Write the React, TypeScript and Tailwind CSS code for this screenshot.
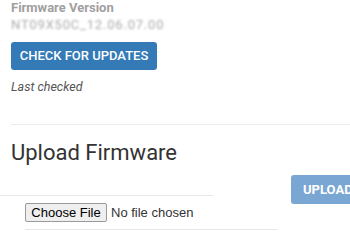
export default function App() {
  return (
    <div className="w-[350px] h-[250px] overflow-hidden bg-white font-['Roboto',sans-serif]">
      <div className="px-[11px]">
        <div className="text-[13px] leading-[15px] font-bold text-[#a0a0a0]">
          Firmware Version
        </div>
        <div className="mt-[3px] text-[13px] leading-[13px] tracking-[0.8px] text-[#ababab] blur-[1.2px]">
          NT09X50C_12.06.07.00
        </div>
        <button
          type="button"
          className="mt-[11px] flex h-[28px] w-[146px] items-center justify-center rounded-[3px] bg-[#337ab7] text-[13px] font-medium text-white"
        >
          CHECK FOR UPDATES
        </button>
        <div className="mt-[10px] text-[12.5px] leading-[14px] italic text-[#555555]">
          Last checked
        </div>
        <div className="mt-[30px] mr-[-11px] border-t border-[#ececec]" />
        <h2 className="mt-[15px] text-[22px] leading-[25px] font-normal text-[#333333]">
          Upload Firmware
        </h2>
      </div>
      <div className="mt-[10px] flex items-start">
        <div className="w-[291px] shrink-0">
          <div className="mt-[20px] w-[213px] border-t border-[#e8e8e8]" />
          <div className="mt-[7px] ml-[25px] flex items-center font-['Liberation_Sans',Arial,sans-serif] text-[13px] text-[#333333]">
            <span className="flex h-[19px] w-[82px] items-center justify-center rounded-[2px] border border-[#9a9a9a] bg-[#efefef] text-black">
              Choose File
            </span>
            <span className="ml-[4px]">No file chosen</span>
          </div>
          <div className="mt-[6px] ml-[25px] w-[252px] border-t border-[#e6e6e6]" />
          <div className="mt-[20px] ml-[8px] w-[277px] border-t border-[#e6e6e6]" />
        </div>
        <button
          type="button"
          className="flex h-[29px] shrink-0 items-center rounded-[3px] bg-[#7aa6d4] px-[12px] text-[13px] font-bold text-white"
        >
          UPLOAD
        </button>
      </div>
    </div>
  );
}
